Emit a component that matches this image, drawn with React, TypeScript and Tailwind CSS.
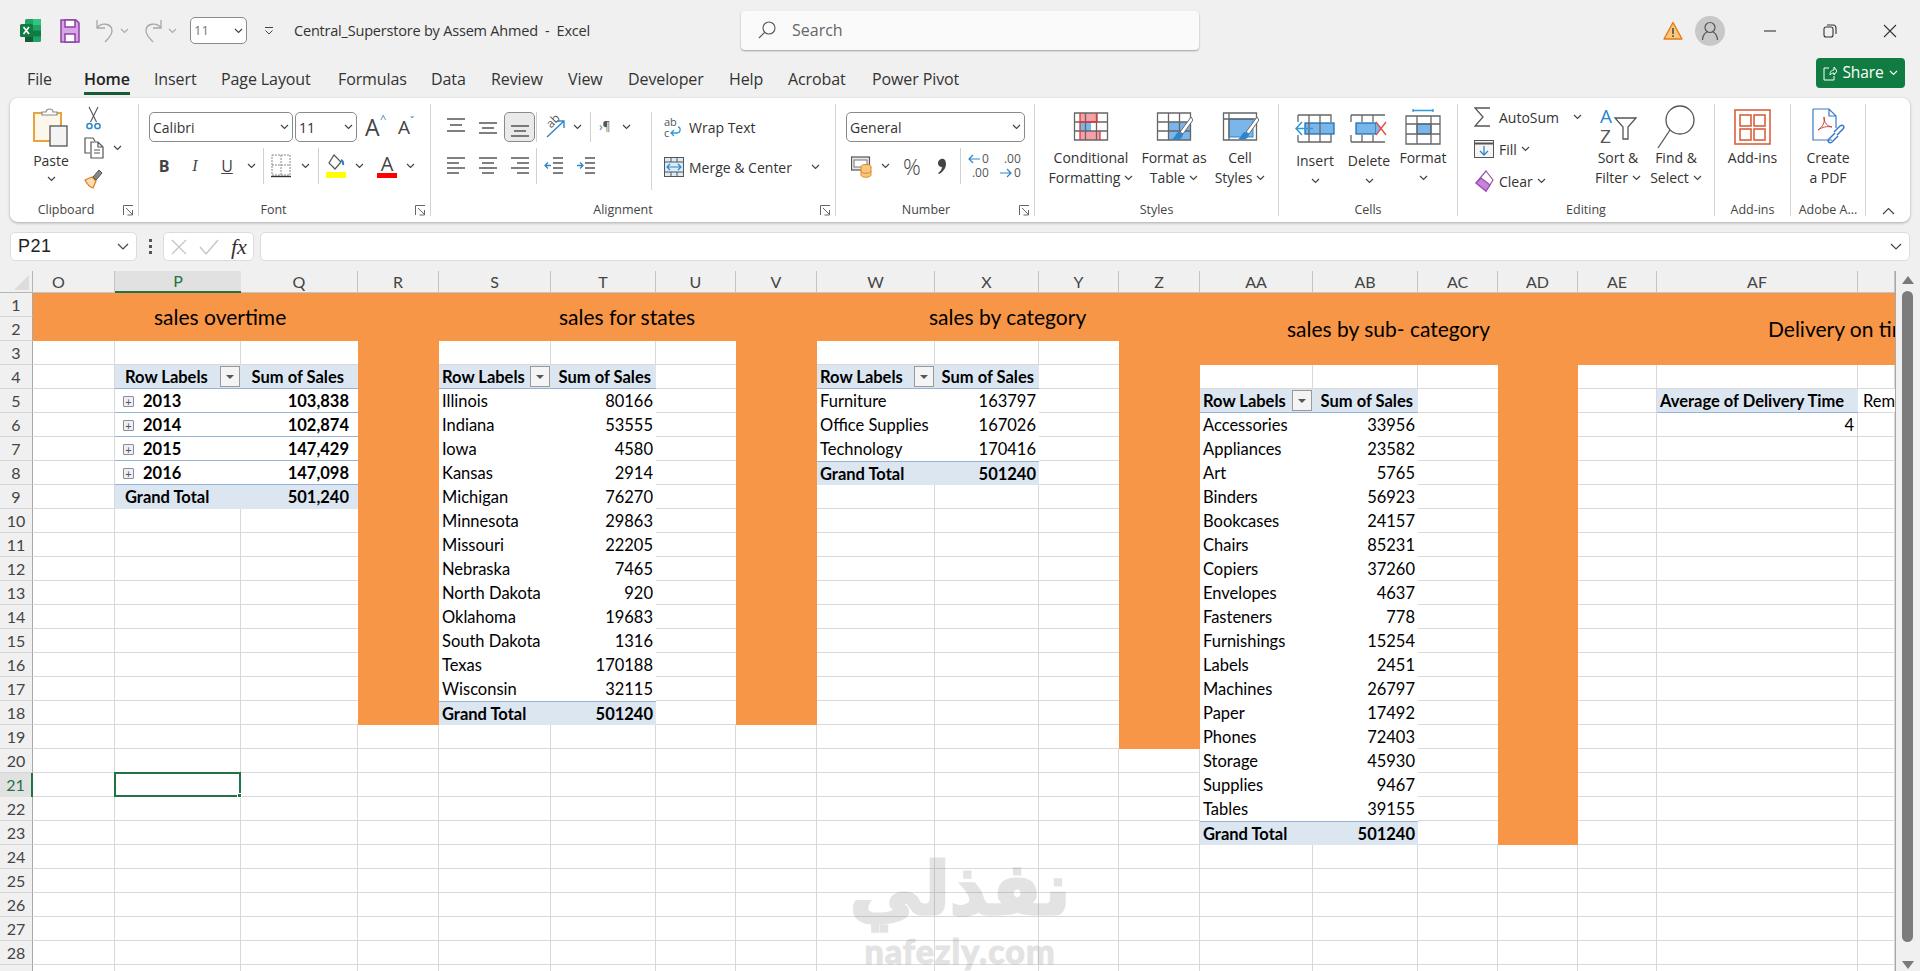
import React from 'react';

const ORANGE = 'bg-[#f79646]';

const Chev = ({ className = '' }: { className?: string }) => (
  <svg width="9" height="6" viewBox="0 0 9 6" className={`shrink-0 ${className}`} fill="none" stroke="#444" strokeWidth="1.2">
    <path d="M1 1l3.5 3.5L8 1" />
  </svg>
);

const Launcher = () => (
  <svg width="11" height="11" viewBox="0 0 11 11" fill="none" stroke="#666" strokeWidth="1">
    <path d="M.5 10V.5H10M3 3l6 6M9.5 5v5h-5" />
  </svg>
);

const VSep = ({ className = 'h-[30px]' }: { className?: string }) => <div className={`w-px bg-[#d0d0d0] shrink-0 ${className}`} />;

/* ---------- title bar icons ---------- */
const ExcelLogo = () => (
  <svg width="21" height="25" viewBox="0 0 21 25">
    <rect x="5" y="1" width="16" height="23" rx="1.5" fill="#21a366" />
    <rect x="13" y="1" width="8" height="6" fill="#33c481" />
    <rect x="13" y="12.5" width="8" height="6" fill="#107c41" />
    <rect x="5" y="12.5" width="8" height="11.5" fill="#185c37" />
    <rect x="0" y="6" width="13" height="13" rx="1.5" fill="#107c41" />
    <path d="M3.5 9l5.5 7M9 9l-5.5 7" stroke="#fff" strokeWidth="1.7" />
  </svg>
);

const SaveIcon = () => (
  <svg width="20" height="24" viewBox="0 0 20 24" fill="#d7a6e5" stroke="#8f3fa8" strokeWidth="1.5">
    <path d="M1 1h15l3 3v19H1z" />
    <rect x="5" y="1" width="10" height="7" fill="#fff" />
    <rect x="5" y="15" width="10" height="8" fill="#fff" />
  </svg>
);

const UndoIcon = ({ flip = false }: { flip?: boolean }) => (
  <svg width="20" height="26" viewBox="0 0 20 26" fill="none" stroke="#a8a8a8" strokeWidth="1.3" className={flip ? '-scale-x-100' : ''}>
    <path d="M2 2v8h8M2 10c4-6 15-5 15 3 0 4-4 8-7 11" />
  </svg>
);

const Warning = () => (
  <svg width="20" height="20" viewBox="0 0 20 20">
    <path d="M10 1.5L19 18H1z" fill="#f8c77a" stroke="#e57b18" strokeWidth="1.4" strokeLinejoin="round" />
    <path d="M10 7v6M10 14.3v1.8" stroke="#444" strokeWidth="1.5" />
  </svg>
);

const Avatar = () => (
  <div className="w-[30px] h-[30px] rounded-full bg-[#c8c8c8] flex items-center justify-center">
    <svg width="18" height="20" viewBox="0 0 18 20" fill="none" stroke="#555" strokeWidth="1.2">
      <circle cx="9" cy="6.5" r="5" />
      <path d="M1.5 19c0-5 3-7.5 4.5-8M16.5 19c0-5-3-7.5-4.5-8" />
    </svg>
  </div>
);

/* ---------- ribbon icons ---------- */
const Paste = () => (
  <svg width="36" height="39" viewBox="0 0 36 39" fill="none">
    <path d="M6 5h22v28H1V5z" fill="#fdf6ea" stroke="#e8a33d" strokeWidth="2" />
    <path d="M9 7V4h4c0-4 7-4 7 0h4v3z" fill="#fff" stroke="#8a8a8a" strokeWidth="1.2" />
    <rect x="17" y="18" width="17" height="20" fill="#f3f3f3" stroke="#555" strokeWidth="1.3" />
  </svg>
);
const Cut = () => (
  <svg width="15" height="24" viewBox="0 0 15 24" fill="none" stroke="#555" strokeWidth="1.1">
    <path d="M3 1l7.5 15M12 1L4.500 16" />
    <circle cx="3.500" cy="20" r="2.600" stroke="#2e86c9" strokeWidth="1.500" />
    <circle cx="11.500" cy="20" r="2.600" stroke="#2e86c9" strokeWidth="1.500" />
  </svg>
);
const Copy = () => (
  <svg width="20" height="22" viewBox="0 0 20 22" fill="none" stroke="#555" strokeWidth="1.2">
    <path d="M6 16H1V1h8l2 3" />
    <path d="M7 5h7l5 5v11H7zM14 5v5h5M10 13h6M10 16h6" fill="#fff" />
  </svg>
);
const Painter = () => (
  <svg width="20" height="21" viewBox="0 0 20 21" fill="none">
    <path d="M1 12l7-3 4 4-3 7c-3-1-6-4-8-8z" fill="#f9dcb4" stroke="#d9821f" strokeWidth="1.3" />
    <path d="M9 9l6-7 3 3-6 7z" fill="#888" stroke="#555" />
  </svg>
);
const SmallAlign = ({ lines }: { lines: string }) => (
  <svg width="20" height="22" viewBox="0 0 20 22" fill="none" stroke="#555" strokeWidth="1.300">
    <path d={lines} />
  </svg>
);
const Orient = () => (
  <div className="relative w-[22px] h-[24px]">
    <span className="absolute left-[2px] top-[-2px] -rotate-45 text-[12px] leading-[16px] text-[#555]">ab</span>
    <svg width="22" height="24" viewBox="0 0 22 24" fill="none" className="absolute left-0 top-0">
      <path d="M3 22L20 6M13 6h7v7" stroke="#2e86c9" strokeWidth="1.400" />
    </svg>
  </div>
);
const Borders = () => (
  <svg width="20" height="24" viewBox="0 0 20 24" fill="none" stroke="#888" strokeWidth="1" strokeDasharray="2 1">
    <path d="M1 1h18v20H1zM10 1v20M1 11h18" />
    <path d="M0 22.500h20" stroke="#333" strokeWidth="1.400" strokeDasharray="none" />
  </svg>
);
const Fill = () => (
  <svg width="20" height="24" viewBox="0 0 20 24" fill="none">
    <path d="M8 1l7 7-6 7-6-6z" fill="#fff" stroke="#555" strokeWidth="1.200" />
    <path d="M15 6c2 1 2.500 3 2 5" stroke="#2e86c9" strokeWidth="2" />
    <rect x="0" y="18" width="20" height="6" fill="#ffff00" />
  </svg>
);
const FontColor = () => (
  <div className="flex flex-col items-center w-[20px] leading-none">
    <span className="text-[20px] h-[18px] font-['Open_Sans',sans-serif] text-[#444]">A</span>
    <div className="w-[20px] h-[5px] bg-[#ff0000] mt-[1px]" />
  </div>
);
const WrapIcon = () => (
  <div className="relative w-[18px] h-[22px] text-[11px] leading-[11px] text-[#555]">
    <span className="absolute left-0 top-0">ab</span>
    <span className="absolute left-0 top-[11px]">c</span>
    <svg width="18" height="22" viewBox="0 0 18 22" fill="none" className="absolute left-0 top-0">
      <path d="M14 11c3 0 3 6-1 6H7M10 14l-3 3 3 3" stroke="#2e9bd6" strokeWidth="1.300" />
    </svg>
  </div>
);
const MergeIcon = () => (
  <svg width="20" height="20" viewBox="0 0 20 20" fill="none">
    <rect x=".5" y=".5" width="19" height="19" fill="#d9ecf8" stroke="#555" />
    <path d="M.5 5h19M.5 15h19M7 .5V5M13 .5V5M7 15v4.500M13 15v4.500" stroke="#555" />
    <path d="M3 10h14M6 7l-3 3 3 3M14 7l3 3-3 3" stroke="#2e86c9" strokeWidth="1.200" />
  </svg>
);
const Accounting = () => (
  <svg width="22" height="24" viewBox="0 0 22 24" fill="none">
    <rect x=".5" y="3" width="18" height="13" fill="#e8e8e8" stroke="#555" strokeWidth="1.200" />
    <rect x="3" y="6" width="13" height="7" fill="#fff" stroke="#777" />
    <ellipse cx="15" cy="13" rx="5" ry="2.500" fill="#f7c77e" stroke="#e08a1e" />
    <path d="M10 13v8c0 3 10 3 10 0v-8" fill="#f7c77e" stroke="#e08a1e" />
    <path d="M10 17c0 3 10 3 10 0" stroke="#e08a1e" />
  </svg>
);
const DecimalIcon = ({ top, bottom, leftArrow }: { top: string; bottom: string; leftArrow?: boolean }) => (
  <div className="relative w-[21px] h-[26px] text-[#555] text-[12px] leading-[12px]">
    <div className="absolute right-0 top-0">{top}</div>
    <div className="absolute right-0 bottom-0">{bottom}</div>
    <svg width="12" height="10" viewBox="0 0 12 10" className={leftArrow ? 'absolute left-0 top-[1px]' : 'absolute left-0 bottom-[1px]'} fill="none" stroke="#2e86c9" strokeWidth="1.200">
      {leftArrow ? <path d="M12 5H1M5 1L1 5l4 4" /> : <path d="M0 5h11M7 1l4 4-4 4" />}
    </svg>
  </div>
);

const Grid = ({ children }: { children?: React.ReactNode }) => (
  <svg width="37" height="38" viewBox="0 0 37 38" fill="none">
    {children}
  </svg>
);
const gridLines = 'M1.500 5h33v27h-33zM12.500 5v27M23.500 5v27M1.500 14h33M1.500 23h33';

const CondFmt = () => (
  <Grid>
    <rect x="7" y="5" width="17" height="9" fill="#f8a0a8" />
    <rect x="7" y="23" width="20" height="9" fill="#f8a0a8" />
    <rect x="7" y="14" width="11" height="9" fill="#7ab6ea" />
    <path d={gridLines} stroke="#666" strokeWidth="1.300" />
    <path d="M7 5v27M24 5v9H7M27 23v9" stroke="#d83b3b" strokeWidth="1.300" />
  </Grid>
);
const Brush = () => (
  <>
    <path d="M35 9L24 24l3 2L37 12z" fill="#fff" stroke="#666" />
    <path d="M23 24c-4 1-3 5-7 7 5 2 11 0 11-5z" fill="#2e86c9" />
  </>
);
const FormatTable = () => (
  <Grid>
    <rect x="12" y="14" width="22" height="18" fill="#7ab6ea" />
    <path d={gridLines} stroke="#666" strokeWidth="1.300" />
    <Brush />
  </Grid>
);
const CellStyles = () => (
  <Grid>
    <rect x="7" y="11" width="24" height="18" fill="#7ab6ea" stroke="#2e86c9" />
    <path d="M1.500 5h33v27h-33zM7 5v27M1.500 11h33" stroke="#666" strokeWidth="1.300" />
    <Brush />
  </Grid>
);
const InsertIco = () => (
  <svg width="40" height="30" viewBox="0 0 40 30" fill="none">
    <rect x="10" y="9" width="29" height="11" fill="#7ab6ea" stroke="#1f6fb5" strokeWidth="1.300" />
    <path d="M3 1h33v7M3 28h33v-8M3 1v7M3 21v7M14 1v27M25 1v27" stroke="#666" strokeWidth="1.300" />
    <path d="M18 14.500H1M7 8l-6 6.500L7 21" stroke="#2e9bd6" strokeWidth="1.500" />
  </svg>
);
const DeleteIco = () => (
  <svg width="38" height="30" viewBox="0 0 38 30" fill="none">
    <rect x="6" y="9" width="20" height="11" fill="#7ab6ea" stroke="#1f6fb5" strokeWidth="1.300" />
    <path d="M26 9l6 5.500-6 5.500z" fill="#7ab6ea" />
    <path d="M1 1h34M1 28h34M1 1v7M1 21v7M12 1v7M23 1v7M12 21v7M23 21v7" stroke="#666" strokeWidth="1.300" />
    <path d="M26 8l10 13M36 8L26 21" stroke="#e0524f" strokeWidth="1.400" />
  </svg>
);
const FormatIco = () => (
  <svg width="36" height="36" viewBox="0 0 36 36" fill="none">
    <path d="M8 -1v4M28 -1v4M8 1.500h20" stroke="#2e9bd6" strokeWidth="1.300" />
    <rect x="12" y="15" width="14" height="10" fill="#7ab6ea" stroke="#1f6fb5" />
    <path d="M1 7h34v28H1zM12 7v28M26 7v28M1 15h34M1 25h34" stroke="#666" strokeWidth="1.300" />
  </svg>
);
const SortFilter = () => (
  <div className="relative w-[38px] h-[42px] text-[19px] leading-[20px]">
    <span className="absolute left-[1px] top-0 text-[#2e86c9]">A</span>
    <span className="absolute left-[1px] top-[20px] text-[#555]">Z</span>
    <svg width="38" height="42" viewBox="0 0 38 42" fill="none" className="absolute left-0 top-0">
      <path d="M16 12h21l-8 9v12h-5V21z" stroke="#555" strokeWidth="1.300" />
    </svg>
  </div>
);
const FindIco = () => (
  <svg width="38" height="44" viewBox="0 0 38 44" fill="none" stroke="#555" strokeWidth="1.300">
    <circle cx="23" cy="15" r="14" />
    <path d="M13 25L1 43" />
  </svg>
);
const FillIco = () => (
  <svg width="20" height="18" viewBox="0 0 20 18" fill="none">
    <rect x=".5" y=".5" width="19" height="17" fill="#f5f5f5" stroke="#555" />
    <path d="M.5 3.500h19" stroke="#555" strokeWidth="2" />
    <path d="M10 6v9M6 11l4 4 4-4" stroke="#2e86c9" strokeWidth="1.300" />
  </svg>
);
const ClearIco = () => (
  <svg width="20" height="23" viewBox="0 0 20 23" fill="none" stroke="#9b4fb0" strokeWidth="1.200">
    <path d="M12 1l7 9-7 11-10-8z" fill="#fff" />
    <path d="M7 8l9 7-4 6-10-8z" fill="#c884dc" />
  </svg>
);
const Sigma = () => (
  <svg width="17" height="20" viewBox="0 0 17 20" fill="none" stroke="#555" strokeWidth="1.300">
    <path d="M16 1H1l8 9-8 9h15" />
  </svg>
);
const AddIns = () => (
  <svg width="37" height="36" viewBox="0 0 37 36" fill="none" stroke="#d9603b" strokeWidth="1.600">
    <rect x="1" y="1" width="35" height="34" />
    <rect x="6" y="6" width="11" height="11" />
    <rect x="20" y="6" width="11" height="11" />
    <rect x="6" y="20" width="11" height="11" />
    <rect x="20" y="20" width="11" height="11" />
  </svg>
);
const Pdf = () => (
  <svg width="33" height="38" viewBox="0 0 33 38" fill="none" stroke="#3a78c9" strokeWidth="1.200">
    <path d="M1 1h16l7 7v12M17 1v7h7M20 32H1V1" />
    <path d="M6 22c5-3 7-8 6-13 0 6 3 9 8 10-5-1-10 0-14 3z" stroke="#c0392b" strokeWidth=".9" />
    <path d="M22 24l6-6c3-2 5 1 3 3l-6 6M26 28l-6 6c-3 2-5-1-3-3l6-6" strokeWidth="1.500" />
  </svg>
);

/* ---------- ribbon layout ---------- */
const Group = ({
  w,
  label,
  launcher,
  labelCls = 'justify-center',
  children,
}: {
  w: string;
  label: string;
  launcher?: boolean;
  labelCls?: string;
  children: React.ReactNode;
}) => (
  <div className={`${w} shrink-0 h-full flex flex-col border-r border-[#d4d4d4]`}>
    <div className="flex-1 flex min-h-0">{children}</div>
    <div className={`h-[22px] shrink-0 translate-y-[5px] flex items-center text-[12.500px] text-[#444] relative whitespace-nowrap ${labelCls}`}>
      <span>{label}</span>
      {launcher && (
        <span className="absolute right-[4px] top-[6px] flex">
          <Launcher />
        </span>
      )}
    </div>
  </div>
);

const Big = ({
  w,
  icon,
  lines,
  chevInline,
  chevBelow,
  iconH = 'h-[44px]',
}: {
  w: string;
  icon: React.ReactNode;
  lines: string[];
  chevInline?: boolean;
  chevBelow?: boolean;
  iconH?: string;
}) => (
  <div className={`${w} shrink-0 flex flex-col items-center`}>
    <div className={`${iconH} flex items-center justify-center pt-[2px] shrink-0`}>{icon}</div>
    {lines.map((l, i) => (
      <div key={l} className="h-[20px] leading-[20px] flex items-center gap-[4px] whitespace-nowrap shrink-0">
        {l}
        {chevInline && i === lines.length - 1 && <Chev />}
      </div>
    ))}
    {chevBelow && <div className="h-[20px] flex items-center shrink-0"><Chev /></div>}
  </div>
);

const SelectBox = ({ w, text }: { w: string; text: string }) => (
  <div className={`${w} rounded-[5px] h-[30px] bg-white border border-[#8a8a8a] flex items-center justify-between pl-[3px] pr-[3px] text-[14px] shrink-0`}>
    <span>{text}</span>
    <Chev />
  </div>
);

const Ribbon = () => (
  <div className="mx-[10px] h-[124px] shrink-0 bg-white rounded-[8px] shadow-[0_1px_3px_rgba(0,0,0,0.3)] flex py-[6px] text-[14px] text-[#333]">
    {/* Clipboard */}
    <Group w="w-[129px]" label="Clipboard" launcher labelCls="justify-center pr-[16px]">
      <div className="flex flex-col items-center w-[58px] ml-[12px] pt-[4px]">
        <Paste />
        <div className="mt-[5px] leading-[18px]">Paste</div>
        <div className="mt-[6px]"><Chev /></div>
      </div>
      <div className="flex flex-col ml-[4px] pt-[2px]">
        <div className="pl-[2px]"><Cut /></div>
        <div className="flex items-center gap-[9px] mt-[7px]"><Copy /><Chev /></div>
        <div className="mt-[9px]"><Painter /></div>
      </div>
    </Group>

    {/* Font */}
    <Group w="w-[292px]" label="Font" launcher labelCls="justify-center pr-[22px]">
      <div className="flex flex-col pl-[10px] pt-[8px]">
        <div className="flex items-center">
          <SelectBox w="w-[144px]" text="Calibri" />
          <div className="ml-[2px]"><SelectBox w="w-[62px]" text="11" /></div>
          <div className="ml-[8px] relative w-[22px] text-[23px] leading-none text-[#444]">
            A<span className="absolute left-[15px] top-[-3px] text-[11px] text-[#2e86c9]">^</span>
          </div>
          <div className="ml-[11px] relative w-[20px] text-[19px] leading-none text-[#444]">
            A<span className="absolute left-[12px] top-[-2px] text-[10px] text-[#2e86c9]">ˇ</span>
          </div>
        </div>
        <div className="flex items-center h-[30px] mt-[9px] text-[16px] text-[#444]">
          <span className="w-[28px] ml-[1px] text-center font-bold">B</span>
          <span className="w-[28px] ml-[3px] text-center italic font-['Liberation_Serif',serif]">I</span>
          <span className="w-[28px] ml-[4px] text-center underline">U</span>
          <Chev className="ml-[6px]" />
          <VSep className="h-[36px] ml-[7px]" />
          <div className="ml-[7px]"><Borders /></div>
          <Chev className="ml-[10px]" />
          <VSep className="h-[36px] ml-[8px]" />
          <div className="ml-[7px]"><Fill /></div>
          <Chev className="ml-[9px]" />
          <div className="ml-[13px]"><FontColor /></div>
          <Chev className="ml-[9px]" />
        </div>
      </div>
    </Group>

    {/* Alignment */}
    <Group w="w-[405px]" label="Alignment" launcher labelCls="justify-center pr-[20px]">
      <div className="w-[220px] shrink-0 flex flex-col pl-[9px] pt-[8px]">
        <div className="flex items-center h-[30px]">
          <div className="w-[32px] flex justify-center"><SmallAlign lines="M1 3h18M4 9h12M1 15h18" /></div>
          <div className="w-[32px] flex justify-center"><SmallAlign lines="M1 7h18M4 12h12M1 17h18" /></div>
          <div className="w-[31px] h-[30px] rounded-[5px] border border-[#8a8a8a] bg-[#eaeaea] flex justify-center items-center"><SmallAlign lines="M1 10h18M4 15h12M1 20h18" /></div>
          <VSep className="h-[30px] ml-[1px]" />
          <div className="w-[30px] ml-[3px] flex justify-center"><Orient /></div>
          <Chev className="ml-[3px]" />
          <VSep className="h-[30px] ml-[8px]" />
          <span className="ml-[8px] w-[20px] text-[12px] text-[#555]"><span className="text-[#2e86c9]">›</span>¶</span>
          <Chev className="ml-[3px]" />
        </div>
        <div className="flex items-center h-[30px] mt-[9px]">
          <div className="w-[32px] flex justify-center"><SmallAlign lines="M1 3h18M1 8h12M1 13h18M1 18h12" /></div>
          <div className="w-[32px] flex justify-center"><SmallAlign lines="M1 3h18M4 8h12M1 13h18M4 18h12" /></div>
          <div className="w-[32px] flex justify-center"><SmallAlign lines="M1 3h18M7 8h12M1 13h18M7 18h12" /></div>
          <VSep className="h-[36px]" />
          <div className="w-[34px] flex justify-center">
            <svg width="20" height="22" viewBox="0 0 20 22" fill="none" strokeWidth="1.300"><path d="M9 3h10M9 8h10M9 13h10M9 18h10" stroke="#555" /><path d="M7 10.500H1M4 7.500l-3 3 3 3" stroke="#2e86c9" /></svg>
          </div>
          <div className="w-[30px] flex justify-center">
            <svg width="20" height="22" viewBox="0 0 20 22" fill="none" strokeWidth="1.300"><path d="M9 3h10M9 8h10M9 13h10M9 18h10" stroke="#555" /><path d="M1 10.500h6M4 7.500l3 3-3 3" stroke="#2e86c9" /></svg>
          </div>
        </div>
      </div>
      <div className="flex-1 border-l border-[#d4d4d4] mt-[8px] mb-[4px] pl-[12px] flex flex-col">
        <div className="flex items-center h-[30px] shrink-0 gap-[6px]"><WrapIcon /><span className="ml-[1px]">Wrap Text</span></div>
        <div className="flex items-center h-[30px] shrink-0 mt-[10px] gap-[5px]">
          <MergeIcon /><span>Merge &amp; Center</span><Chev className="ml-[14px]" />
        </div>
      </div>
    </Group>

    {/* Number */}
    <Group w="w-[199px]" label="Number" launcher labelCls="justify-center pr-[18px]">
      <div className="flex flex-col pl-[10px] pt-[8px]">
        <SelectBox w="w-[179px]" text="General" />
        <div className="flex items-center h-[30px] mt-[9px]">
          <div className="ml-[5px]"><Accounting /></div>
          <Chev className="ml-[8px]" />
          <span className="ml-[13px] text-[22px] leading-none font-light text-[#444]">%</span>
          <svg width="10" height="17" viewBox="0 0 10 17" className="ml-[16px]" fill="#444"><path d="M4 1c3-1 5 1 5 5 0 4-3 8-7 10l-1-1c2-1 4-4 4-6C2 9 1 7 1 5c0-2 1-3 3-4z" /></svg>
          <VSep className="h-[36px] ml-[13px]" />
          <div className="ml-[7px]"><DecimalIcon top="0" bottom=".00" leftArrow /></div>
          <div className="ml-[11px]"><DecimalIcon top=".00" bottom="0" /></div>
        </div>
      </div>
    </Group>

    {/* Styles */}
    <Group w="w-[244px]" label="Styles">
      <div className="flex pl-[12px]">
        <Big w="w-[88px]" icon={<CondFmt />} lines={['Conditional', 'Formatting']} chevInline />
        <Big w="w-[78px]" icon={<FormatTable />} lines={['Format as', 'Table']} chevInline />
        <Big w="w-[54px]" icon={<CellStyles />} lines={['Cell', 'Styles']} chevInline />
      </div>
    </Group>

    {/* Cells */}
    <Group w="w-[179px]" label="Cells">
      <div className="flex pl-[9px]">
        <Big w="w-[54px]" iconH="h-[47px]" icon={<InsertIco />} lines={['Insert']} chevBelow />
        <Big w="w-[54px]" iconH="h-[47px]" icon={<DeleteIco />} lines={['Delete']} chevBelow />
        <Big w="w-[54px]" icon={<FormatIco />} lines={['Format']} chevBelow />
      </div>
    </Group>

    {/* Editing */}
    <Group w="w-[257px]" label="Editing">
      <div className="w-[131px] shrink-0 flex flex-col pl-[16px] -mt-[3px]">
        <div className="flex items-center h-[32px] shrink-0">
          <div className="w-[22px]"><Sigma /></div>
          <span className="ml-[3px]">AutoSum</span>
          <Chev className="ml-[14px]" />
        </div>
        <div className="flex items-center h-[32px] shrink-0">
          <FillIco />
          <span className="ml-[5px]">Fill</span>
          <Chev className="ml-[4px]" />
        </div>
        <div className="flex items-center h-[32px] shrink-0">
          <ClearIco />
          <span className="ml-[5px]">Clear</span>
          <Chev className="ml-[4px]" />
        </div>
      </div>
      <Big w="w-[58px]" icon={<SortFilter />} lines={['Sort &', 'Filter']} chevInline />
      <Big w="w-[58px]" icon={<FindIco />} lines={['Find &', 'Select']} chevInline />
    </Group>

    {/* Add-ins */}
    <Group w="w-[76px]" label="Add-ins">
      <div className="w-full"><Big w="w-full" icon={<AddIns />} lines={['Add-ins']} /></div>
    </Group>

    {/* Adobe */}
    <Group w="w-[75px]" label="Adobe A...">
      <div className="w-full"><Big w="w-full" icon={<Pdf />} lines={['Create', 'a PDF']} /></div>
    </Group>

    <div className="flex-1 flex items-end justify-center pb-[1px]">
      <svg width="13" height="8" viewBox="0 0 13 8" fill="none" stroke="#444" strokeWidth="1.200"><path d="M1 7l5.500-5.500L12 7" /></svg>
    </div>
  </div>
);

/* ---------- sheet data ---------- */
const COLS = ['O', 'P', 'Q', 'R', 'S', 'T', 'U', 'V', 'W', 'X', 'Y', 'Z', 'AA', 'AB', 'AC', 'AD', 'AE', 'AF', 'AG'];
const ROWS = Array.from({ length: 29 }, (_, i) => i + 1);

type Cell = { text?: React.ReactNode; cls?: string };
const cells: Record<string, Cell> = {};

const HEAD = 'bg-[#dce6f1] border-b border-[#95b3d7] font-bold';
const TOTAL = 'bg-[#dce6f1] border-t border-[#95b3d7] font-bold';

const FilterBtn = () => (
  <span className="absolute right-[1px] top-[1px] w-[20px] h-[21px] bg-[#f4f4f4] border border-[#9a9a9a] flex items-center justify-center">
    <span className="w-0 h-0 border-x-[4px] border-x-transparent border-t-[4px] border-t-[#555]" />
  </span>
);

const addPivot = (lc: string, rc: string, top: number, rows: [string, string][], total: string) => {
  cells[lc + top] = { text: <><span>Row Labels</span><FilterBtn /></>, cls: `${HEAD} pl-[3px]` };
  cells[rc + top] = { text: 'Sum of Sales', cls: `${HEAD} justify-end pr-[5px]` };
  rows.forEach(([a, b], i) => {
    cells[lc + (top + 1 + i)] = { text: a, cls: 'pl-[3px]' };
    cells[rc + (top + 1 + i)] = { text: b, cls: 'justify-end pr-[3px]' };
  });
  const t = top + rows.length + 1;
  cells[lc + t] = { text: 'Grand Total', cls: `${TOTAL} pl-[3px]` };
  cells[rc + t] = { text: total, cls: `${TOTAL} justify-end pr-[3px]` };
};

// first table is indented and bold
cells.P4 = { text: <><span>Row Labels</span><FilterBtn /></>, cls: `${HEAD} pl-[10px]` };
cells.Q4 = { text: 'Sum of Sales', cls: `${HEAD} justify-end pr-[14px]` };
([['2013', '103,838'], ['2014', '102,874'], ['2015', '147,429'], ['2016', '147,098']] as const).forEach(([y, v], i) => {
  cells[`P${5 + i}`] = {
    text: (
      <>
        <span className="w-[11px] h-[11px] mr-[9px] rounded-[1px] border border-[#8a8a9a] bg-[#f0f0f4] flex items-center justify-center text-[#555] text-[11px] leading-none font-normal">+</span>
        {y}
      </>
    ),
    cls: 'pl-[8px] font-bold border-b border-[#95b3d7]',
  };
  cells[`Q${5 + i}`] = { text: v, cls: 'justify-end pr-[9px] font-bold border-b border-[#95b3d7]' };
});
cells.P9 = { text: 'Grand Total', cls: 'bg-[#dce6f1] font-bold pl-[10px]' };
cells.Q9 = { text: '501,240', cls: 'bg-[#dce6f1] font-bold justify-end pr-[9px]' };

addPivot('S', 'T', 4, [
  ['Illinois', '80166'], ['Indiana', '53555'], ['Iowa', '4580'], ['Kansas', '2914'], ['Michigan', '76270'],
  ['Minnesota', '29863'], ['Missouri', '22205'], ['Nebraska', '7465'], ['North Dakota', '920'], ['Oklahoma', '19683'],
  ['South Dakota', '1316'], ['Texas', '170188'], ['Wisconsin', '32115'],
], '501240');
addPivot('W', 'X', 4, [['Furniture', '163797'], ['Office Supplies', '167026'], ['Technology', '170416']], '501240');
addPivot('AA', 'AB', 5, [
  ['Accessories', '33956'], ['Appliances', '23582'], ['Art', '5765'], ['Binders', '56923'], ['Bookcases', '24157'],
  ['Chairs', '85231'], ['Copiers', '37260'], ['Envelopes', '4637'], ['Fasteners', '778'], ['Furnishings', '15254'],
  ['Labels', '2451'], ['Machines', '26797'], ['Paper', '17492'], ['Phones', '72403'], ['Storage', '45930'],
  ['Supplies', '9467'], ['Tables', '39155'],
], '501240');
cells.AF5 = { text: 'Average of Delivery Time', cls: `${HEAD} pl-[3px]` };
cells.AG5 = { text: 'Remaining', cls: 'pl-[5px] border-b border-[#d9d9d9]' };
cells.AF6 = { text: '4', cls: 'justify-end pr-[3px] border-b border-r border-[#d9d9d9]' };

// title bands, merged over the first rows
type Merge = { col: string; span: number; rows: number; title: string; pad: string };
const merges: Merge[] = [
  { col: 'O', span: 4, rows: 2, title: 'sales overtime', pad: 'pl-[121px]' },
  { col: 'S', span: 4, rows: 2, title: 'sales for states', pad: 'pl-[120px]' },
  { col: 'W', span: 3, rows: 2, title: 'sales by category', pad: 'pl-[112px]' },
  { col: 'Z', span: 5, rows: 3, title: 'sales by sub- category', pad: 'pl-[168px]' },
  { col: 'AE', span: 3, rows: 3, title: 'Delivery on time', pad: 'pl-[190px]' },
];

const isOrange = (col: string, r: number) => {
  if (r <= 2) return true;
  if (r === 3 && COLS.indexOf(col) >= COLS.indexOf('Z')) return true;
  if ((col === 'R' || col === 'V') && r <= 18) return true;
  if (col === 'Z' && r <= 19) return true;
  if (col === 'AD' && r <= 23) return true;
  return false;
};

const isCovered = (col: string, r: number) =>
  merges.some((m) => {
    const start = COLS.indexOf(m.col);
    const i = COLS.indexOf(col);
    return r <= m.rows && i >= start && i < start + m.span;
  });

const Sheet = () => (
  <div className="flex-1 min-h-0 flex">
    <div className="w-[1895px] shrink-0 overflow-hidden grid grid-cols-[33px_82px_126px_117px_81px_112px_105px_80px_81px_118px_104px_80px_81px_113px_105px_80px_80px_79px_201px_37px] auto-rows-[24px] grid-rows-[22px] bg-white font-['Lato',sans-serif] text-[16.500px] text-black">
      <div className="bg-[#f0f0f0] border-b border-r border-[#b5b5b5] relative">
        <span className="absolute right-[3px] bottom-[2px] w-0 h-0 border-l-[15px] border-l-transparent border-b-[15px] border-b-[#dcdcdc]" />
      </div>
      {COLS.map((c) => (
        <div
          key={c}
          className={
            c === 'P'
              ? 'bg-[#e1e1e1] border-b-2 border-[#217346] text-[#217346] text-[16px] flex items-center justify-center'
              : c === 'O'
                ? 'bg-[#f0f0f0] border-b border-r border-[#c4c4c4] text-[#444] text-[16px] flex items-center justify-center pr-[30px]'
                : 'bg-[#f0f0f0] border-b border-r border-[#c4c4c4] text-[#444] text-[16px] flex items-center justify-center'
          }
        >
          {c === 'AG' ? '' : c}
        </div>
      ))}
      {ROWS.map((r) => (
        <React.Fragment key={r}>
          <div
            className={
              r === 21
                ? 'bg-[#e1e1e1] border-r-2 border-[#217346] text-[#217346] text-[16px] flex items-center justify-center'
                : 'bg-[#f0f0f0] border-r border-b border-r-[#a8a8a8] border-b-[#d4d4d4] text-[#444] text-[16px] flex items-center justify-center'
            }
          >
            {r < 29 ? r : ''}
          </div>
          {COLS.map((c, ci) => {
            const merge = merges.find((m) => m.col === c && r === 1);
            if (merge) {
              return (
                <div
                  key={c}
                  style={{ gridColumn: `span ${merge.span}`, gridRow: `span ${merge.rows}` }}
                  className={`${ORANGE} ${merge.pad} flex items-center whitespace-nowrap overflow-hidden text-[21px]`}
                >
                  {merge.title}
                </div>
              );
            }
            if (isCovered(c, r)) return null;
            if (isOrange(c, r)) return <div key={c} className={ORANGE} />;
            const cell = cells[c + r];
            if (cell) {
              return (
                <div key={c} className={`relative flex items-center whitespace-nowrap overflow-hidden pt-[1px] ${cell.cls}`}>
                  {cell.text}
                </div>
              );
            }
            const next = COLS[ci + 1];
            const noRight = next && isOrange(next, r);
            const active = c === 'P' && r === 21;
            return (
              <div
                key={c}
                className={`relative border-b border-[#d9d9d9] ${noRight ? '' : 'border-r'} ${active ? 'z-10' : ''}`}
              >
                {active && (
                  <div className="absolute -inset-px border-2 border-[#217346]">
                    <span className="absolute -right-[3px] -bottom-[3px] w-[5px] h-[5px] bg-[#217346] border border-white" />
                  </div>
                )}
              </div>
            );
          })}
        </React.Fragment>
      ))}
    </div>

    {/* vertical scrollbar */}
    <div className="flex-1 bg-[#f0f0f0] border-l border-[#a8a8a8] flex flex-col items-center pt-[3px] pr-[1px]">
      <span className="w-0 h-0 border-x-[6px] border-x-transparent border-b-[8px] border-b-[#7a7a7a] mt-[2px]" />
      <div className="w-[11px] h-[651px] shrink-0 rounded-full bg-[#7c7c7c] mt-[7px]" />
      <span className="w-0 h-0 border-x-[6px] border-x-transparent border-t-[8px] border-t-[#7a7a7a] mt-[19px]" />
    </div>
  </div>
);

const TABS = [
  { label: 'File', cls: 'w-[57px]' },
  { label: 'Home', cls: 'w-[70px]' },
  { label: 'Insert', cls: 'w-[67px]' },
  { label: 'Page Layout', cls: 'w-[117px]' },
  { label: 'Formulas', cls: 'w-[93px]' },
  { label: 'Data', cls: 'w-[60px]' },
  { label: 'Review', cls: 'w-[77px]' },
  { label: 'View', cls: 'w-[60px]' },
  { label: 'Developer', cls: 'w-[101px]' },
  { label: 'Help', cls: 'w-[59px]' },
  { label: 'Acrobat', cls: 'w-[84px]' },
  { label: 'Power Pivot', cls: 'w-[100px]' },
];

export default function App() {
  return (
    <div className="relative w-full h-screen overflow-hidden flex flex-col bg-[#f0f0f0] font-['Open_Sans',sans-serif] text-[#333]">
      {/* Title bar */}
      <div className="h-[61px] shrink-0 flex items-center">
        <div className="w-[741px] shrink-0 flex items-center pl-[20px]">
          <ExcelLogo />
          <div className="ml-[19px]"><SaveIcon /></div>
          <div className="ml-[15px]"><UndoIcon /></div>
          <Chev className="ml-[5px] opacity-40" />
          <div className="ml-[14px]"><UndoIcon flip /></div>
          <Chev className="ml-[5px] opacity-40" />
          <div className="ml-[13px] w-[57px] h-[27px] rounded-[5px] bg-white border border-[#8a8a8a] flex items-center justify-between px-[3px] text-[13px] text-[#777]">
            <span>11</span><Chev />
          </div>
          <svg width="10" height="10" viewBox="0 0 10 10" className="ml-[17px]" fill="none" stroke="#444"><path d="M1 1.500h8M1.500 4.500L5 8l3.500-3.500" /></svg>
          <span className="ml-[20px] text-[14.500px] tracking-[-0.2px] whitespace-nowrap">Central_Superstore by Assem Ahmed&nbsp; -&nbsp; Excel</span>
        </div>
        <div className="w-[458px] h-[39px] shrink-0 bg-[#fafafa] rounded-[4px] shadow-[0_1px_2px_rgba(0,0,0,0.35)] flex items-center pl-[17px] pb-[1px] text-[16px] text-[#666]">
          <svg width="18" height="18" viewBox="0 0 18 18" fill="none" stroke="#555" strokeWidth="1.100"><circle cx="11" cy="7" r="6" /><path d="M6.500 11.500L1 17" /></svg>
          <span className="ml-[16px]">Search</span>
        </div>
        <div className="flex-1 flex items-center justify-end pr-[23px]">
          <Warning />
          <div className="ml-[12px]"><Avatar /></div>
          <svg width="14" height="14" viewBox="0 0 14 14" className="ml-[38px]" stroke="#333" strokeWidth="1.100"><path d="M1 7h12" /></svg>
          <svg width="14" height="14" viewBox="0 0 14 14" className="ml-[46px]" fill="none" stroke="#333" strokeWidth="1.100"><rect x="1" y="3" width="9" height="10" rx="2" /><path d="M4 1h6c2 0 3 1 3 3v6" /></svg>
          <svg width="14" height="14" viewBox="0 0 14 14" className="ml-[46px]" stroke="#333" strokeWidth="1.100"><path d="M1 1l12 12M13 1L1 13" /></svg>
        </div>
      </div>

      {/* Tabs */}
      <div className="h-[37px] shrink-0 flex items-start pl-[27px] text-[16px] tracking-[-0.1px] relative">
        {TABS.map((t) => (
          <div key={t.label} className={`${t.cls} shrink-0 h-[34px] flex flex-col justify-start`}>
            <span className={`w-fit leading-[37px] whitespace-nowrap ${t.label === 'Home' ? 'border-b-[3px] border-[#185c37] h-[34px] font-semibold text-[#222]' : 'h-[31px]'}`}>{t.label}</span>
          </div>
        ))}
        <div className="ml-auto mr-[15px] -mt-[3px] w-[89px] h-[30px] rounded-[4px] bg-[#107c41] text-white flex items-center justify-center gap-[5px] text-[15.500px]">
          <svg width="14" height="16" viewBox="0 0 14 16" fill="none" stroke="#fff" strokeWidth="1"><path d="M6 3H1v12h10v-4M7 10c0-4 2-5 4-5V2l3 4-3 4V8c-2 0-3 1-4 2z" /></svg>
          Share
          <svg width="9" height="6" viewBox="0 0 9 6" fill="none" stroke="#fff" strokeWidth="1.200"><path d="M1 1l3.500 3.500L8 1" /></svg>
        </div>
      </div>

      <Ribbon />

      {/* Formula bar */}
      <div className="h-[49px] shrink-0 flex items-start pt-[10px] pl-[10px] pr-[10px]">
        <div className="w-[127px] h-[29px] bg-white rounded-[5px] border border-[#dcdcdc] flex items-center justify-between pl-[7px] pr-[7px] text-[18px] tracking-[0.5px] font-['Liberation_Sans',sans-serif] text-[#222]">
          P21
          <svg width="12" height="8" viewBox="0 0 12 8" fill="none" stroke="#444" strokeWidth="1.200"><path d="M1 1l5 5 5-5" /></svg>
        </div>
        <div className="w-[26px] h-[29px] flex flex-col items-center justify-center gap-[3px]">
          <span className="w-[3px] h-[3px] bg-[#555]" /><span className="w-[3px] h-[3px] bg-[#555]" /><span className="w-[3px] h-[3px] bg-[#555]" />
        </div>
        <div className="w-[91px] h-[29px] bg-white rounded-[5px] border border-[#dcdcdc] flex items-center pl-[7px] gap-[12px]">
          <svg width="16" height="16" viewBox="0 0 16 16" stroke="#c4c4c4" strokeWidth="1.300"><path d="M1 1l14 14M15 1L1 15" /></svg>
          <svg width="20" height="16" viewBox="0 0 20 16" fill="none" stroke="#c4c4c4" strokeWidth="1.300"><path d="M1 8l6 7L19 1" /></svg>
          <span className="text-[22px] italic font-['Liberation_Serif',serif] text-[#333] leading-none">fx</span>
        </div>
        <div className="flex-1 ml-[6px] h-[29px] bg-white rounded-[5px] border border-[#dcdcdc] flex items-center justify-end pr-[7px]">
          <svg width="12" height="8" viewBox="0 0 12 8" fill="none" stroke="#444" strokeWidth="1.200"><path d="M1 1l5 5 5-5" /></svg>
        </div>
      </div>

      <Sheet />

      {/* Watermark over the sheet */}
      <div className="absolute left-[854px] top-[845px] w-[212px] pointer-events-none flex flex-col items-center text-[#777] opacity-20">
        <div dir="rtl" className="text-[72px] font-bold leading-[88px] font-['DejaVu_Sans',sans-serif] whitespace-nowrap [-webkit-text-stroke:3px_#777]">نفذلي</div>
        <div className="text-[34px] font-black leading-[36px] font-['Lato',sans-serif] tracking-[1px] [-webkit-text-stroke:1px_#777]">nafezly.com</div>
      </div>
    </div>
  );
}
